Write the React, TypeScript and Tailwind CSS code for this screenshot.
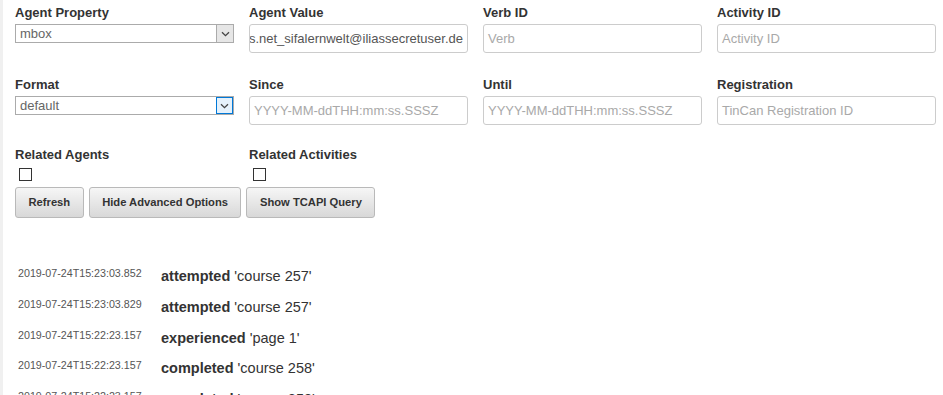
import React from "react";

const font = { fontFamily: '"Liberation Sans", Arial, sans-serif' };

function Label({ children }: { children: React.ReactNode }) {
  return <div className="h-[20px] text-[13px] leading-[20px] font-bold text-[#333]">{children}</div>;
}

function Chevron({ color = "#444" }: { color?: string }) {
  return (
    <svg width="9" height="6" viewBox="0 0 9 6" fill="none">
      <path d="M1 1.2 L4.5 4.6 L8 1.2" stroke={color} strokeWidth="1.3" />
    </svg>
  );
}

function Select({ value, focused }: { value: string; focused?: boolean }) {
  return (
    <div className="mt-[1px] flex h-[19px] w-[219px] items-stretch border border-[#ababab] bg-white">
      <div className="flex flex-1 items-center pl-[4px] text-[13px] text-[#666]">{value}</div>
      <div
        className={
          focused
            ? "flex w-[17px] items-center justify-center border border-[#0078d7] bg-[#e5f1fb]"
            : "flex w-[17px] items-center justify-center border-l border-[#ababab] bg-[#e6e6e6]"
        }
      >
        <Chevron />
      </div>
    </div>
  );
}

function Input({ placeholder, value }: { placeholder?: string; value?: string }) {
  return (
    <div className="mt-[1px] flex h-[29px] w-[219px] items-center overflow-hidden rounded-[3px] border border-[#cccccc] bg-white text-[13px]">
      {value ? (
        <div className="flex w-full justify-end whitespace-nowrap pr-[4px] text-[#555]">{value}</div>
      ) : (
        <div className="whitespace-nowrap pl-[4px] text-[#a9a9a9]">{placeholder}</div>
      )}
    </div>
  );
}

function Field({ label, children }: { label: string; children: React.ReactNode }) {
  return (
    <div className="flex flex-col">
      <Label>{label}</Label>
      {children}
    </div>
  );
}

function Checkbox() {
  return <div className="ml-[4px] mt-[3px] h-[13px] w-[13px] border border-[#333] bg-white" />;
}

function Button({ children }: { children: React.ReactNode }) {
  return (
    <div className="flex h-[31px] items-center rounded-[3px] border border-[#b9b9b9] bg-gradient-to-b from-[#f6f6f6] to-[#d8d8d8] px-[12.5px] text-[11.2px] font-bold text-[#333]">
      {children}
    </div>
  );
}

const rows = [
  ["2019-07-24T15:23:03.852", "attempted", "'course 257'"],
  ["2019-07-24T15:23:03.829", "attempted", "'course 257'"],
  ["2019-07-24T15:22:23.157", "experienced", "'page 1'"],
  ["2019-07-24T15:22:23.157", "completed", "'course 258'"],
  ["2019-07-24T15:22:23.157", "completed", "'course 258'"],
];

export default function App() {
  return (
    <div className="flex h-[395px] w-[943px] overflow-hidden bg-white" style={font}>
      <div className="w-[3px] shrink-0 bg-[#f0f0f0]" />
      <div className="flex flex-col pl-[12px] pt-[3px]">
        <div className="grid grid-cols-[219px_219px_219px_219px] gap-x-[15px]">
          <Field label="Agent Property">
            <Select value="mbox" />
          </Field>
          <Field label="Agent Value">
            <Input value="xapi-ilias.net_sifalernwelt@iliassecretuser.de" />
          </Field>
          <Field label="Verb ID">
            <Input placeholder="Verb" />
          </Field>
          <Field label="Activity ID">
            <Input placeholder="Activity ID" />
          </Field>
        </div>
        <div className="mt-[22px] grid grid-cols-[219px_219px_219px_219px] gap-x-[15px]">
          <Field label="Format">
            <Select value="default" focused />
          </Field>
          <Field label="Since">
            <Input placeholder="YYYY-MM-ddTHH:mm:ss.SSSZ" />
          </Field>
          <Field label="Until">
            <Input placeholder="YYYY-MM-ddTHH:mm:ss.SSSZ" />
          </Field>
          <Field label="Registration">
            <Input placeholder="TinCan Registration ID" />
          </Field>
        </div>
        <div className="mt-[20px] grid grid-cols-[219px_219px_219px_219px] gap-x-[15px]">
          <div className="flex flex-col">
            <Label>Related Agents</Label>
            <Checkbox />
          </div>
          <div className="flex flex-col">
            <Label>Related Activities</Label>
            <Checkbox />
          </div>
        </div>
        <div className="mt-[6px] flex gap-[5px]">
          <Button>Refresh</Button>
          <Button>Hide Advanced Options</Button>
          <Button>Show TCAPI Query</Button>
        </div>
        <div className="mt-[46px] flex flex-col">
          {rows.map((r, i) => (
            <div key={i} className="flex h-[30.75px] items-start">
              <div className="w-[146px] pl-[3px] pt-[1px] text-[10.7px] leading-[16px] text-[#555]">{r[0]}</div>
              <div className="whitespace-nowrap pt-[2px] text-[14.5px] leading-[20px] text-[#333]">
                <span className="font-bold">{r[1]}</span> {r[2]}
              </div>
            </div>
          ))}
        </div>
      </div>
    </div>
  );
}
